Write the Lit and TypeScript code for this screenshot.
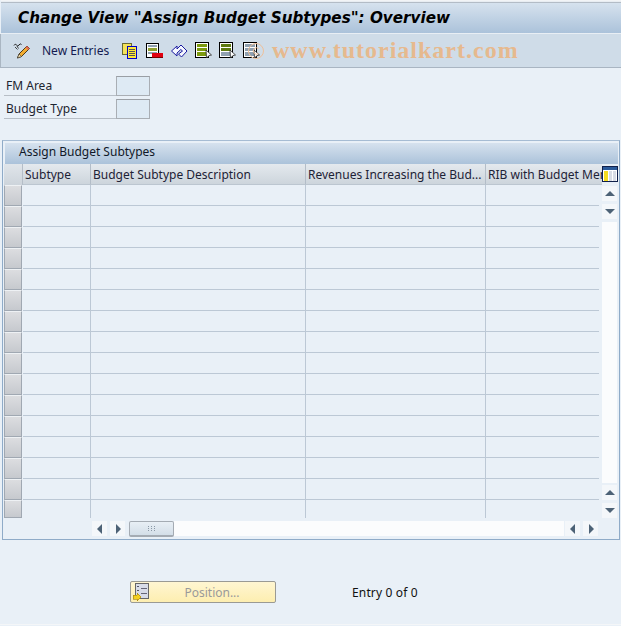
import { LitElement, html, css, svg } from "lit";
import { customElement } from "lit/decorators.js";

const cursor = svg`<path d="M11 8 L16.5 13 L14 13.5 L11.5 16 Z" fill="#fff" stroke="#222" stroke-width="0.8"/>`;
const selDoc = (a: string, b: string, c: string) => svg`<svg width="17" height="17" viewBox="0 0 17 17">
  <g shape-rendering="crispEdges">
  <rect x="0.5" y="0.5" width="13" height="15" fill="#fff" stroke="#000"/>
  <rect x="2" y="2" width="10" height="3" fill="${a}"/><rect x="2" y="6" width="10" height="3" fill="${b}"/><rect x="2" y="10" width="10" height="4" fill="${c}"/>
  </g>${cursor}</svg>`;

@customElement("app-root")
export class AppRoot extends LitElement {
  static styles = css`
    :host { display: block; width: 621px; height: 626px; background: #e9f0f7; overflow: hidden; position: relative;
      font-family: "Noto Sans", Tahoma, sans-serif; font-size: 12px; color: #111; }
    .frame { height: 626px; display: flex; flex-direction: column; box-sizing: border-box; }
    .top { height: 3px; background: #e8edf2; border-top: 1px solid #f2f4f6; border-bottom: 1px solid #b3bcc6; box-sizing: border-box; margin-left: 1px; }
    .title { height: 31px; box-sizing: border-box; background: linear-gradient(#d6e2ee, #abc2da); border-bottom: 1px solid #e8eef4; margin-left: 1px;
      padding: 0 0 0 17px; display: flex; align-items: center; font: italic bold 15.2px "DejaVu Sans", sans-serif; color: #000; white-space: nowrap; }
    .toolbar { height: 34px; box-sizing: border-box; background: #cfdce8; border-bottom: 1px solid #a9b5c2; border-left: 1px solid #aab6c2; display: flex; align-items: center; padding: 0 0 0 12px; }
    .toolbar .pen { flex: none; }
    .toolbar .lbl { width: 92px; flex: none; box-sizing: border-box; padding-left: 12px; color: #131b50; white-space: nowrap; }
    .toolbar .ic { display: flex; width: 24.3px; flex: none; }
    .wm { position: absolute; left: 248px; top: 37px; display: flex; align-items: center; gap: 8px; color: #e6b98e; font: bold 24px "Liberation Serif", serif; letter-spacing: 1px; white-space: nowrap; pointer-events: none; }
    .fields { padding: 8px 0 0 4px; display: flex; flex-direction: column; gap: 3px; }
    .field { display: flex; height: 20px; }
    .field label { width: 112px; box-sizing: border-box; padding-left: 2px; height: 20px; line-height: 20px; border-bottom: 1px solid #b7bec6; color: #1c2530; }
    .field .in { width: 34px; height: 20px; box-sizing: border-box; background: #deeaf4; border: 1px solid #a9aeb4; border-top-color: #9a9fa5; }
    .panel { margin: 21px 1px 0 2px; height: 400px; box-sizing: border-box; border: 1px solid #8fabc8; border-top-color: #a6bcd3; padding: 2px 1px 0 2px; display: flex; flex-direction: column; }
    .ptitle { height: 21px; line-height: 17px; flex: none; padding-left: 14px; background: linear-gradient(#d6e2ee, #abc2da); color: #101828; }
    .tablewrap { display: flex; margin-left: -1px; }
    .table { width: 595px; flex: none; }
    .row { display: flex; height: 21px; }
    .sel { width: 18px; flex: none; box-sizing: border-box; background: linear-gradient(#dcdde0, #c6c9ce); border: 1px solid #a0a8b2; border-top-color: #eef1f4; }
    .gap { width: 1px; flex: none; }
    .head .sel { background: linear-gradient(#e0e5ea, #cdd4db); border: none; border-right: 1px solid #b5bec8; width: 19px; }
    .cell { box-sizing: border-box; border-right: 1px solid #bcc8d5; border-bottom: 1px solid #bcc8d5; flex: none; overflow: hidden; white-space: nowrap; }
    .row.last { height: 18px; } .row.last .cell { border-bottom: none; }
    .c1 { width: 68px; } .c2 { width: 215px; } .c3 { width: 180px; } .c4 { width: 113px; border-right: none; }
    .head .cell { background: linear-gradient(#e4e9ee, #cdd5dc); border-right: 1px solid #b3bdc8; border-bottom: 1px solid #bcc6d0; padding-left: 2px; line-height: 21px; color: #1d2236; }
    .head .c4 { width: 116px; border-right: none; margin-right: -3px; }
    .vs { width: 16px; margin-left: 3px; flex: none; display: flex; flex-direction: column; align-items: stretch; position: relative; }
    .colset { height: 17px; margin: 2px 0 3px 0; display: flex; }
    .sb { flex: none; background: #f4f7fa; display: flex; align-items: center; justify-content: center; width: 15px; height: 15px; }
    .vs .sb { margin-bottom: 3px; }
    .vs .sb:last-child { margin-bottom: 0; }
    .vs .track { flex: 1; background: #fbfcfd; width: 15px; margin-bottom: 2px; }
    .hs { display: flex; align-items: stretch; height: 16px; margin: 3px 0 0 87px; }
    .hs .sb { height: 15px; }
    .hs .sb + .sb { margin-left: 3px; }
    .thumb { width: 45px; height: 16px; box-sizing: border-box; margin-left: 4px; border: 1px solid #a4abb3; border-bottom-width: 2px; border-radius: 2px; background: linear-gradient(#e8eff5, #d3dee8); display: flex; align-items: center; justify-content: center; }
    .htrack { width: 390px; height: 15px; background: #fbfcfd; margin-right: 1px; }
    .foot { display: flex; align-items: center; margin: 41px 0 0 130px; height: 22px; }
    .btn { width: 146px; height: 22px; box-sizing: border-box; border: 1px solid #9a9a94; border-radius: 2px; background: linear-gradient(#fff6d2, #fdeeb0); display: flex; align-items: center; color: #9a9a9a; padding-left: 1px; }
    .btn span { flex: 1; text-align: center; }
    .entry { margin-left: 76px; color: #111; letter-spacing: 0.15px; }
    .bline { margin-top: 21px; height: 1px; background: #f4f6f8; }
  `;

  private rows() {
    return Array.from({ length: 16 }, (_, i) => html`<div class="row ${i === 15 ? "last" : ""}">
      <div class="sel"></div><div class="gap"></div>
      <div class="cell c1"></div><div class="cell c2"></div><div class="cell c3"></div><div class="cell c4"></div></div>`);
  }
  private tri(dir: string) {
    const pts: Record<string, string> = { up: "1,7 11,7 6,2", down: "1,2 11,2 6,7", left: "7,0 7,10 2,5", right: "3,0 3,10 8,5" };
    const vert = dir === "up" || dir === "down";
    return svg`<svg width="${vert ? 12 : 10}" height="${vert ? 9 : 10}" viewBox="0 0 ${vert ? 12 : 10} ${vert ? 9 : 10}"><polygon points="${pts[dir]}" fill="#4d6276"/></svg>`;
  }

  render() {
    return html`<div class="frame">
      <div class="top"></div>
      <div class="title">Change View "Assign Budget Subtypes": Overview</div>
      <div class="toolbar">
        <svg class="pen" width="17" height="17" viewBox="0 0 17 17">
          <path d="M1 3.5 q1.2 -2.5 2.5 -0.5 t2.5 0 q1.2 -2 2.5 -0.5" fill="none" stroke="#222" stroke-width="1"/>
          <path d="M2 5 l2.5 2.5 M4 4 l1.5 2.5" stroke="#333" stroke-width="0.9" fill="none"/>
          <path d="M14 4 L16.5 6.5 L8.5 14.5 L4.5 16 L6 12 Z" fill="#f2ac30" stroke="#3a2a10" stroke-width="0.9"/>
          <path d="M14 4 L16.5 6.5 L15 8 L12.5 5.5 Z" fill="#e56a58"/>
          <path d="M6 12 L8.5 14.5 L4.5 16 Z" fill="#f6e0b0" stroke="#222" stroke-width="0.5"/>
        </svg>
        <span class="lbl">New Entries</span>
        <span class="ic"><svg width="16" height="16" viewBox="0 0 16 16" shape-rendering="crispEdges">
          <rect x="0.5" y="0.5" width="9" height="11" fill="#f4e25a" stroke="#6a6a30"/>
          <rect x="5.5" y="3.5" width="9" height="12" fill="#ffe838" stroke="#0000c8"/>
          <path d="M7 6h6M7 8h6M7 10h6M7 12h6" stroke="#555" stroke-width="1"/></svg></span>
        <span class="ic"><svg width="17" height="16" viewBox="0 0 17 16" shape-rendering="crispEdges">
          <rect x="0.5" y="0.5" width="12" height="14" fill="#fff" stroke="#000"/>
          <rect x="2" y="2" width="9" height="2" fill="#8fa0b0"/><rect x="2" y="5" width="9" height="3" fill="#8fa030"/><rect x="2" y="9" width="9" height="2" fill="#8fa0b0"/>
          <rect x="6" y="10" width="11" height="4" fill="#e00010"/><rect x="6" y="14" width="11" height="1" fill="#700"/></svg></span>
        <span class="ic"><svg width="17" height="16" viewBox="0 0 17 16">
          <path d="M0.5 8 L6 3 L6 6 L10 2 L16 8 L10.5 14 L7.5 11 L11.5 8 L9.8 6.5 L6 10 L6 13 Z" fill="#f6f8ff" stroke="#1a1aa0" stroke-width="1"/></svg></span>
        <span class="ic">${selDoc("#7d9a10", "#7d9a10", "#7d9a10")}</span>
        <span class="ic">${selDoc("#5d7a10", "#5d7a10", "#8fa0b0")}</span>
        <span class="ic">${selDoc("#8fa0b0", "#8fa0b0", "#8fa0b0")}</span>
      </div>
      <div class="wm">
        <svg width="16" height="18" viewBox="0 0 16 18"><circle cx="8" cy="9" r="7.5" fill="none" stroke="#eec09a" stroke-width="1"/><path d="M10.5 6.5 a3.2 3.2 0 1 0 0 5" fill="none" stroke="#eec09a"/></svg>
        <span>www.tutorialkart.com</span>
      </div>
      <div class="fields">
        <div class="field"><label>FM Area</label><div class="in"></div></div>
        <div class="field"><label>Budget Type</label><div class="in"></div></div>
      </div>
      <div class="panel">
        <div class="ptitle">Assign Budget Subtypes</div>
        <div class="tablewrap">
          <div class="table">
            <div class="row head"><div class="sel"></div>
              <div class="cell c1">Subtype</div><div class="cell c2">Budget Subtype Description</div>
              <div class="cell c3">Revenues Increasing the Bud...</div><div class="cell c4">RIB with Budget Memo</div></div>
            ${this.rows()}
          </div>
          <div class="vs">
            <div class="colset"><svg width="16" height="16" viewBox="0 0 16 16" shape-rendering="crispEdges">
              <rect x="0.5" y="0.5" width="15" height="15" fill="#fff" stroke="#10204a"/>
              <rect x="1" y="1" width="14" height="3" fill="#2a5a9a"/>
              <rect x="2" y="5" width="4" height="10" fill="#f6dc20"/><rect x="7" y="5" width="3" height="10" fill="#d8dce4"/><rect x="11" y="5" width="3" height="10" fill="#d8dce4"/>
            </svg></div>
            <div class="sb">${this.tri("up")}</div>
            <div class="sb">${this.tri("down")}</div>
            <div class="track"></div>
            <div class="sb">${this.tri("up")}</div>
            <div class="sb">${this.tri("down")}</div>
          </div>
        </div>
        <div class="hs">
          <div class="sb">${this.tri("left")}</div>
          <div class="sb">${this.tri("right")}</div>
          <div class="thumb"><svg width="9" height="7" viewBox="0 0 9 7" shape-rendering="crispEdges"><path d="M1 1h1M4 1h1M7 1h1M1 3h1M4 3h1M7 3h1M1 5h1M4 5h1M7 5h1" stroke="#8a98a6"/></svg></div>
          <div class="htrack"></div>
          <div class="sb">${this.tri("left")}</div>
          <div class="sb">${this.tri("right")}</div>
        </div>
      </div>
      <div class="foot">
        <div class="btn"><svg width="17" height="18" viewBox="0 0 17 18" shape-rendering="crispEdges">
          <rect x="3.5" y="0.5" width="13" height="15" fill="#d8dce8" stroke="#666"/>
          <path d="M9 5h6M9 10h6" stroke="#667"/><path d="M5 3h2M5 7h2" stroke="#556"/>
          <path d="M1 12h4v-2l4 4l-4 4v-2h-4z" fill="#f4d020" stroke="#a08010" stroke-width="0.6"/></svg>
          <span>Position...</span></div>
        <div class="entry">Entry 0 of 0</div>
      </div>
      <div class="bline"></div>
    </div>`;
  }
}
